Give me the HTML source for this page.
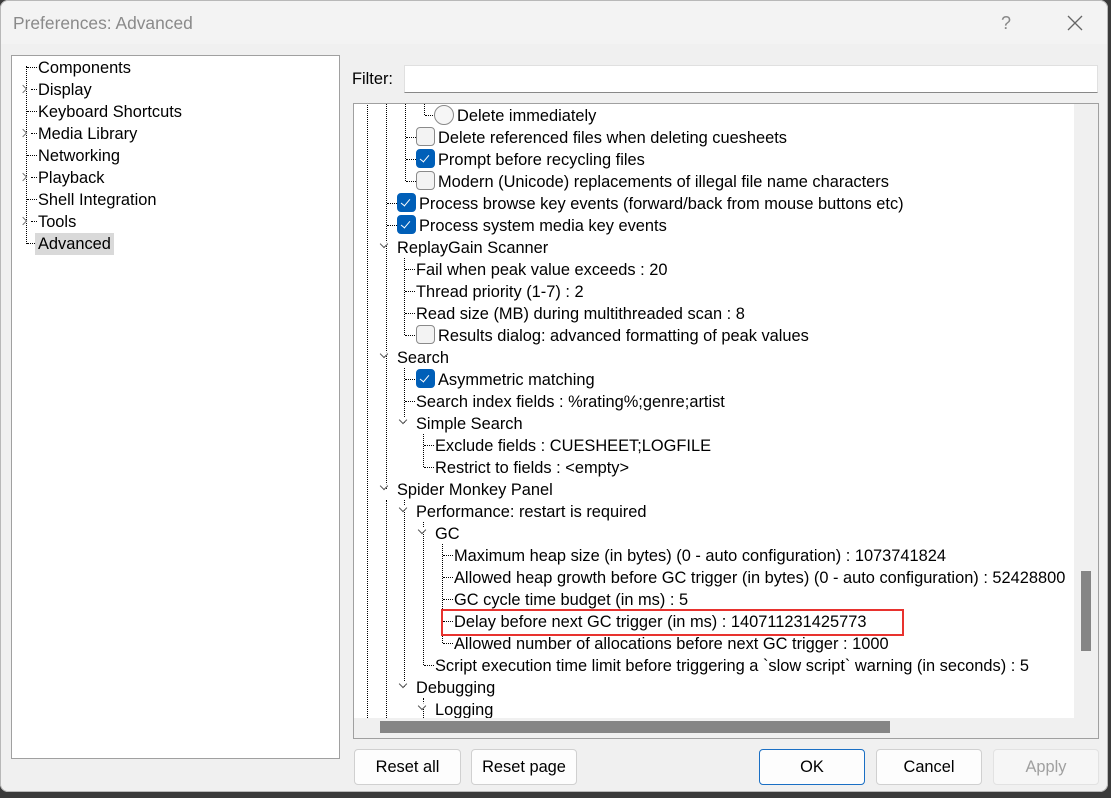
<!DOCTYPE html>
<html><head><meta charset="utf-8"><style>
*{margin:0;padding:0;box-sizing:border-box}
body{width:1111px;height:798px;background:#3a3a3a;position:relative;overflow:hidden;font-family:"Liberation Sans",sans-serif;font-size:16.4px;color:#000}
.win{position:absolute;left:0;top:0;width:1108px;height:792px;background:#f0f0f0;box-shadow:inset 0 0 0 1px #b8b8b8;border-radius:8px;overflow:hidden}
.title{position:absolute;left:1px;top:1px;width:1106px;height:43px;background:#f3f3f3;border-radius:8px 8px 0 0}
.title span{position:absolute;left:12px;top:12px;font-size:17.4px;color:#8a8a8a}
.abs{position:absolute}
.panel{background:#fff;border:1px solid #a0a0a0}
.r{position:absolute;white-space:nowrap;height:22px;line-height:22px;transform:translateY(1px)}
.cb{position:absolute;width:19px;height:19px;border:1px solid #8a8a8a;border-radius:4px;background:#f3f3f3}
.cb.on{background:#005fb8;border-color:#005fb8}
.cb.on:after{content:"";position:absolute;left:5px;top:3px;width:4px;height:8px;border:solid #fff;border-width:0 1.3px 1.3px 0;transform:rotate(40deg)}
.v{position:absolute;border-left:1px dotted #000;width:0}
.h{position:absolute;border-top:1px dotted #000;height:0}
.chev{position:absolute;width:6px;height:6px;border:solid #555;border-width:0 1px 1px 0;transform:rotate(45deg);background:#fff}
.chr{position:absolute;width:6px;height:6px;border:solid #777;border-width:0 1px 1px 0;transform:rotate(-45deg);background:#fff}
.btn{position:absolute;height:36px;background:#fdfdfd;border:1px solid #d0d0d0;border-radius:4px;text-align:center;line-height:35px;font-size:16.4px}
</style></head><body>
<div class="win">
<div class="title"><span>Preferences: Advanced</span>
<span style="left:1000px;top:12px;color:#888;font-size:18px">?</span>
<svg class="abs" style="left:1066px;top:14px" width="16" height="16"><path d="M1 1L15 15M15 1L1 15" stroke="#666" stroke-width="1.3"/></svg></div>

<div class="abs panel" style="left:11px;top:55px;width:329px;height:704px">
<div class="v" style="left:14px;top:10px;height:178px"></div>
<div class="h" style="left:15px;top:11px;width:10px"></div>
<div class="h" style="left:19px;top:33px;width:6px"></div>
<div class="h" style="left:15px;top:55px;width:10px"></div>
<div class="h" style="left:19px;top:77px;width:6px"></div>
<div class="h" style="left:15px;top:99px;width:10px"></div>
<div class="h" style="left:19px;top:121px;width:6px"></div>
<div class="h" style="left:15px;top:143px;width:10px"></div>
<div class="h" style="left:19px;top:165px;width:6px"></div>
<div class="h" style="left:15px;top:187px;width:10px"></div>
<div class="chr" style="left:8px;top:30px"></div>
<div class="chr" style="left:8px;top:74px"></div>
<div class="chr" style="left:8px;top:118px"></div>
<div class="chr" style="left:8px;top:162px"></div>
<div class="r" style="left:26px;top:0">Components</div>
<div class="r" style="left:26px;top:22px">Display</div>
<div class="r" style="left:26px;top:44px">Keyboard Shortcuts</div>
<div class="r" style="left:26px;top:66px">Media Library</div>
<div class="r" style="left:26px;top:88px">Networking</div>
<div class="r" style="left:26px;top:110px">Playback</div>
<div class="r" style="left:26px;top:132px">Shell Integration</div>
<div class="r" style="left:26px;top:154px">Tools</div>
<div class="r" style="left:23px;top:176px;background:#d9d9d9;padding:0 3px">Advanced</div>
</div>

<div class="r" style="left:352px;top:67px">Filter:</div>
<div class="abs" style="left:404px;top:65px;width:694px;height:28px;background:#fff;border:1px solid #e0e0e0;border-bottom:1px solid #888"></div>

<div class="abs panel" style="left:353px;top:103px;width:746px;height:636px;overflow:hidden;border-color:#a0a0a0">
<div class="abs" style="left:720px;top:0;width:25px;height:615px;background:#f0f0f0"></div>
<div class="abs" style="left:727px;top:467px;width:10px;height:80px;background:#858585"></div>
<div class="abs" style="left:0;top:614px;width:745px;height:22px;background:#f0f0f0"></div>
<div class="abs" style="left:26px;top:617px;width:510px;height:12px;background:#858585"></div>
<div style="position:absolute;left:-354px;top:-104px;width:1074px;height:718px;overflow:hidden;clip-path:inset(104px 0 0 354px)">
<div class="v" style="left:367px;top:103px;height:615px"></div>
<div class="v" style="left:386px;top:103px;height:386px"></div>
<div class="v" style="left:386px;top:500px;height:218px"></div>
<div class="v" style="left:405px;top:103px;height:78px"></div>
<div class="v" style="left:424px;top:103px;height:12px"></div>
<div class="v" style="left:404px;top:258px;height:77px"></div>
<div class="v" style="left:404px;top:368px;height:55px"></div>
<div class="v" style="left:423px;top:434px;height:33px"></div>
<div class="v" style="left:404px;top:500px;height:187px"></div>
<div class="v" style="left:423px;top:522px;height:143px"></div>
<div class="v" style="left:442px;top:544px;height:99px"></div>
<div class="v" style="left:423px;top:698px;height:20px"></div>
<div class="h" style="left:425px;top:115px;width:10px"></div>
<div class="h" style="left:406px;top:137px;width:10px"></div>
<div class="h" style="left:406px;top:159px;width:10px"></div>
<div class="h" style="left:406px;top:181px;width:10px"></div>
<div class="h" style="left:387px;top:203px;width:10px"></div>
<div class="h" style="left:387px;top:225px;width:10px"></div>
<div class="h" style="left:405px;top:269px;width:10px"></div>
<div class="h" style="left:405px;top:291px;width:10px"></div>
<div class="h" style="left:405px;top:313px;width:10px"></div>
<div class="h" style="left:405px;top:335px;width:10px"></div>
<div class="h" style="left:405px;top:379px;width:10px"></div>
<div class="h" style="left:405px;top:401px;width:10px"></div>
<div class="h" style="left:424px;top:445px;width:10px"></div>
<div class="h" style="left:424px;top:467px;width:10px"></div>
<div class="h" style="left:443px;top:555px;width:10px"></div>
<div class="h" style="left:443px;top:577px;width:10px"></div>
<div class="h" style="left:443px;top:599px;width:10px"></div>
<div class="h" style="left:443px;top:621px;width:10px"></div>
<div class="h" style="left:443px;top:643px;width:10px"></div>
<div class="h" style="left:424px;top:665px;width:10px"></div>
<div class="chev" style="left:381px;top:241px"></div>
<div class="chev" style="left:381px;top:351px"></div>
<div class="chev" style="left:400px;top:417px"></div>
<div class="chev" style="left:381px;top:483px"></div>
<div class="chev" style="left:400px;top:505px"></div>
<div class="chev" style="left:419px;top:527px"></div>
<div class="chev" style="left:400px;top:681px"></div>
<div class="chev" style="left:419px;top:703px"></div>
<div class="abs" style="left:434px;top:105px;width:20px;height:20px;border:1px solid #8a8a8a;border-radius:50%;background:#f6f6f6"></div>
<div class="r" style="left:457px;top:104px">Delete immediately</div>
<div class="cb" style="left:416px;top:127px"></div><div class="r" style="left:438px;top:126px">Delete referenced files when deleting cuesheets</div>
<div class="cb on" style="left:416px;top:149px"></div><div class="r" style="left:438px;top:148px">Prompt before recycling files</div>
<div class="cb" style="left:416px;top:171px"></div><div class="r" style="left:438px;top:170px">Modern (Unicode) replacements of illegal file name characters</div>
<div class="cb on" style="left:397px;top:193px"></div><div class="r" style="left:419px;top:192px">Process browse key events (forward/back from mouse buttons etc)</div>
<div class="cb on" style="left:397px;top:215px"></div><div class="r" style="left:419px;top:214px">Process system media key events</div>
<div class="r" style="left:397px;top:236px">ReplayGain Scanner</div>
<div class="r" style="left:416px;top:258px">Fail when peak value exceeds : 20</div>
<div class="r" style="left:416px;top:280px">Thread priority (1-7) : 2</div>
<div class="r" style="left:416px;top:302px">Read size (MB) during multithreaded scan : 8</div>
<div class="cb" style="left:416px;top:325px"></div><div class="r" style="left:438px;top:324px">Results dialog: advanced formatting of peak values</div>
<div class="r" style="left:397px;top:346px">Search</div>
<div class="cb on" style="left:416px;top:369px"></div><div class="r" style="left:438px;top:368px">Asymmetric matching</div>
<div class="r" style="left:416px;top:390px">Search index fields : %rating%;genre;artist</div>
<div class="r" style="left:416px;top:412px">Simple Search</div>
<div class="r" style="left:435px;top:434px">Exclude fields : CUESHEET;LOGFILE</div>
<div class="r" style="left:435px;top:456px">Restrict to fields : &lt;empty&gt;</div>
<div class="r" style="left:397px;top:478px">Spider Monkey Panel</div>
<div class="r" style="left:416px;top:500px">Performance: restart is required</div>
<div class="r" style="left:435px;top:522px">GC</div>
<div class="r" style="left:454px;top:544px">Maximum heap size (in bytes) (0 - auto configuration) : 1073741824</div>
<div class="r" style="left:454px;top:566px">Allowed heap growth before GC trigger (in bytes) (0 - auto configuration) : 52428800</div>
<div class="r" style="left:454px;top:588px">GC cycle time budget (in ms) : 5</div>
<div class="r" style="left:454px;top:610px">Delay before next GC trigger (in ms) : 140711231425773</div>
<div class="r" style="left:454px;top:632px">Allowed number of allocations before next GC trigger : 1000</div>
<div class="r" style="left:435px;top:654px">Script execution time limit before triggering a `slow script` warning (in seconds) : 5</div>
<div class="r" style="left:416px;top:676px">Debugging</div>
<div class="r" style="left:435px;top:698px">Logging</div>
<div class="abs" style="left:441px;top:609px;width:463px;height:27px;border:2px solid #e8322e"></div>
</div>
</div>

<div class="btn" style="left:354px;top:749px;width:107px">Reset all</div>
<div class="btn" style="left:471px;top:749px;width:106px">Reset page</div>
<div class="btn" style="left:759px;top:749px;width:106px;border-color:#1a6fc4">OK</div>
<div class="btn" style="left:876px;top:749px;width:106px">Cancel</div>
<div class="btn" style="left:993px;top:749px;width:106px;background:#f6f6f6;color:#a0a0a0;border-color:#e2e2e2">Apply</div>
</div>
</body></html>
